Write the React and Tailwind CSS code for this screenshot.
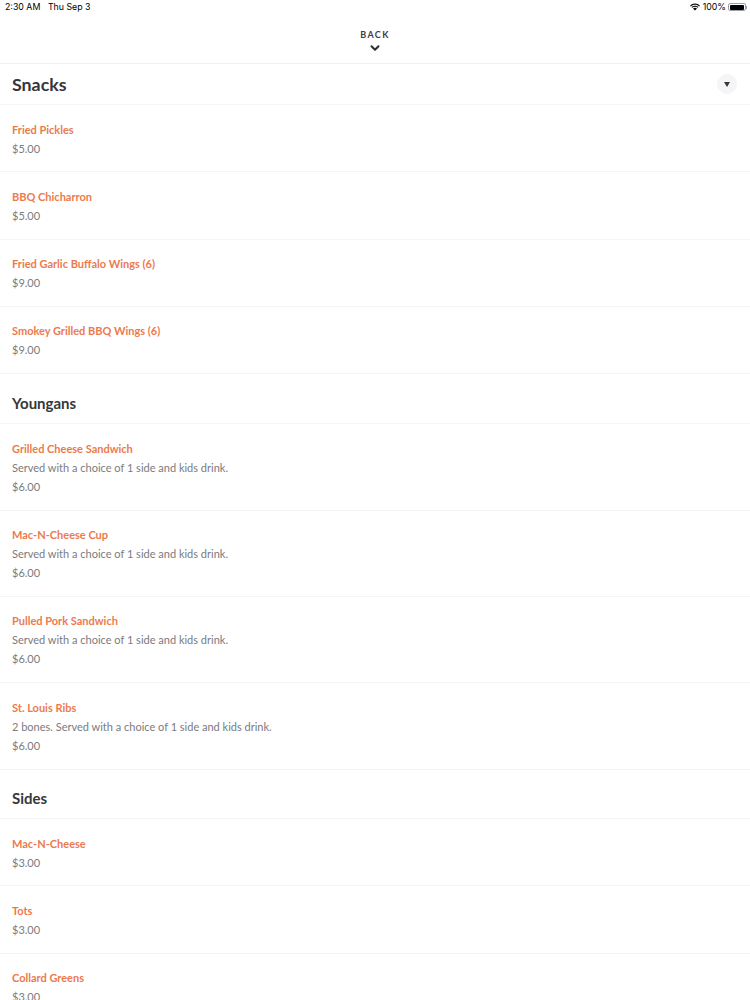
import React from 'react';
import { ChevronDown } from 'lucide-react';

const kidsNote = 'Served with a choice of 1 side and kids drink.';

const menu = [
  {
    title: 'Snacks',
    headerClass: 'h-[41px]',
    titleClass: 'text-[17.8px]',
    items: [
      { name: 'Fried Pickles', price: '$5.00' },
      { name: 'BBQ Chicharron', price: '$5.00' },
      { name: 'Fried Garlic Buffalo Wings (6)', price: '$9.00' },
      { name: 'Smokey Grilled BBQ Wings (6)', price: '$9.00' },
    ],
  },
  {
    title: 'Youngans',
    headerClass: 'h-[50px] pt-[10px]',
    titleClass: 'text-[15px]',
    items: [
      { name: 'Grilled Cheese Sandwich', desc: kidsNote, price: '$6.00' },
      { name: 'Mac-N-Cheese Cup', desc: kidsNote, price: '$6.00' },
      { name: 'Pulled Pork Sandwich', desc: kidsNote, price: '$6.00' },
      { name: 'St. Louis Ribs', desc: '2 bones. Served with a choice of 1 side and kids drink.', price: '$6.00' },
    ],
  },
  {
    title: 'Sides',
    headerClass: 'h-[49.4px] pt-[9px]',
    titleClass: 'text-[15px]',
    items: [
      { name: 'Mac-N-Cheese', price: '$3.00' },
      { name: 'Tots', price: '$3.00' },
      { name: 'Collard Greens', price: '$3.00' },
    ],
  },
];

const StatusBar = () => (
  <div className="flex h-[15px] items-center justify-between pl-[5px] pr-[3px] text-[8.8px] leading-none text-black font-['Inter',sans-serif]">
    <div className="flex gap-[7.5px]">
      <span>2:30 AM</span>
      <span>Thu Sep 3</span>
    </div>
    <div className="flex items-center gap-[3px]">
      <svg width="10" height="8" viewBox="0 0 22 16" fill="black">
        <path d="M11 3c3.6 0 6.9 1.4 9.3 3.7l1.5-1.7C18.900 2.200 15.100.5 11 .5S3.100 2.200.2 5l1.500 1.700C4.100 4.400 7.400 3 11 3z" />
        <path d="M11 7.500c2.400 0 4.500.9 6.100 2.400l1.600-1.700C16.700 6.300 14 5.100 11 5.100S5.300 6.300 3.300 8.200l1.600 1.700C6.500 8.400 8.600 7.500 11 7.500z" />
        <path d="M11 9.700c-1.700 0-3.200.7-4.400 1.700L11 15.800l4.400-4.400c-1.200-1-2.700-1.700-4.400-1.700z" />
      </svg>
      <span>100%</span>
      <div className="ml-[-1px] flex items-center">
        <div className="h-[8px] w-[18px] rounded-[2px] border border-gray-400 p-[0.5px]">
          <div className="h-full w-[14px] rounded-[1px] bg-black" />
        </div>
        <div className="h-[3px] w-[1px] bg-gray-400" />
      </div>
    </div>
  </div>
);

const MenuItem = ({ item }) => (
  <div className={`border-b border-[#f4f4f4] px-3 pt-[14.5px] ${item.desc ? 'h-[86.4px]' : 'h-[67.3px]'}`}>
    <div className="text-[11px] font-bold leading-[19px] text-[#ec7a4e]">{item.name}</div>
    {item.desc && <div className="text-[11px] leading-[19px] text-[#7b7b7e]">{item.desc}</div>}
    <div className="text-[11px] leading-[19px] text-[#7b7b7e]">{item.price}</div>
  </div>
);

export default function App() {
  return (
    <div className="h-[1000px] overflow-hidden bg-white font-['Lato',sans-serif]">
      <StatusBar />
      <div className="flex h-[49px] flex-col items-center border-b border-[#f2f2f2] pt-[14px]">
        <span className="text-[9px] font-bold leading-[11px] tracking-[1.4px] text-[#3c3c43]">BACK</span>
        <ChevronDown className="mt-[1px] h-[14px] w-[14px] text-[#2e2e33]" strokeWidth={3.5} />
      </div>
      {menu.map((section, i) => (
        <section key={section.title}>
          <div className={`flex items-center justify-between border-b border-[#f4f4f4] px-3 ${section.headerClass}`}>
            <h2 className={`font-bold text-[#36363b] ${section.titleClass}`}>{section.title}</h2>
            {i === 0 && (
              <button className="mr-[1px] flex h-[20px] w-[20px] items-center justify-center rounded-full bg-[#f5f4f6]">
                <svg width="6" height="5" viewBox="0 0 6 5" fill="#36363b">
                  <path d="M0 0h6L3 5z" />
                </svg>
              </button>
            )}
          </div>
          {section.items.map((item) => (
            <MenuItem key={item.name} item={item} />
          ))}
        </section>
      ))}
    </div>
  );
}
